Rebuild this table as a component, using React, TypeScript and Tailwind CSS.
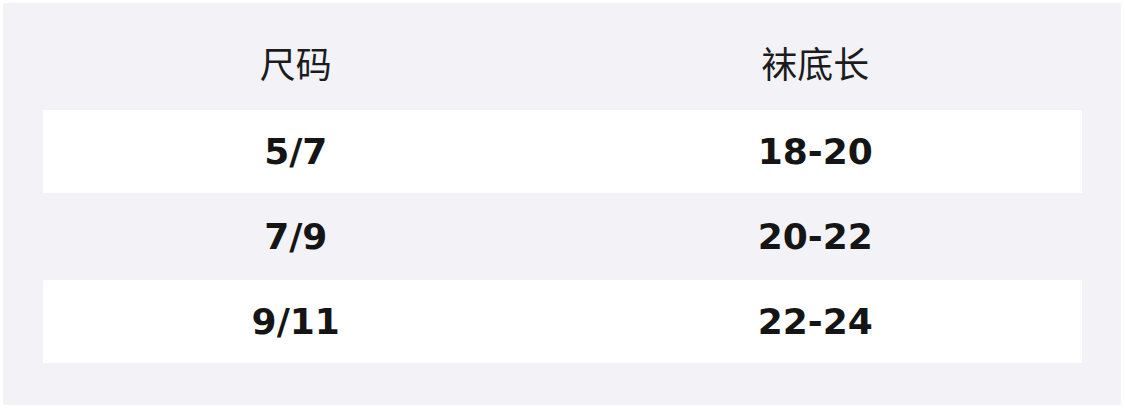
import React from 'react';

const ROWS = [
  { size: '5/7', length: '18-20', h: 'h-[83px]', bg: 'bg-white' },
  { size: '7/9', length: '20-22', h: 'h-[87px]', bg: 'bg-transparent' },
  { size: '9/11', length: '22-24', h: 'h-[83px]', bg: 'bg-white' },
];

export default function App() {
  return (
    <div className="w-[1125px] h-[408px] bg-white p-[3px] pr-[4px]"
      style={{ fontFamily: '"DejaVu Sans", "Noto Sans CJK SC", sans-serif' }}>
      <div className="h-[402px] bg-[#f3f3f7] pl-[40px] pr-[39px]">
        {/* Header */}
        <div className="h-[107px] flex items-center ml-[-7px] mr-[7px] pt-[11px]">
          <div className="flex-1 text-center text-[36px] text-[#1c1c1e]" style={{ fontFamily: '"Noto Sans CJK SC", sans-serif' }}>尺码</div>
          <div className="flex-1 text-center text-[36px] text-[#1c1c1e]" style={{ fontFamily: '"Noto Sans CJK SC", sans-serif' }}>袜底长</div>
        </div>

        {/* Rows */}
        {ROWS.map((row, i) => (
          <div key={i} className={`${row.h} ${row.bg} flex items-center`}>
            <div className="flex-1 flex ml-[-7px] mr-[7px]">
              <div className="flex-1 text-center font-bold text-[36px] text-[#151515]">{row.size}</div>
              <div className="flex-1 text-center font-bold text-[36px] text-[#151515]">{row.length}</div>
            </div>
          </div>
        ))}
      </div>
    </div>
  );
}
